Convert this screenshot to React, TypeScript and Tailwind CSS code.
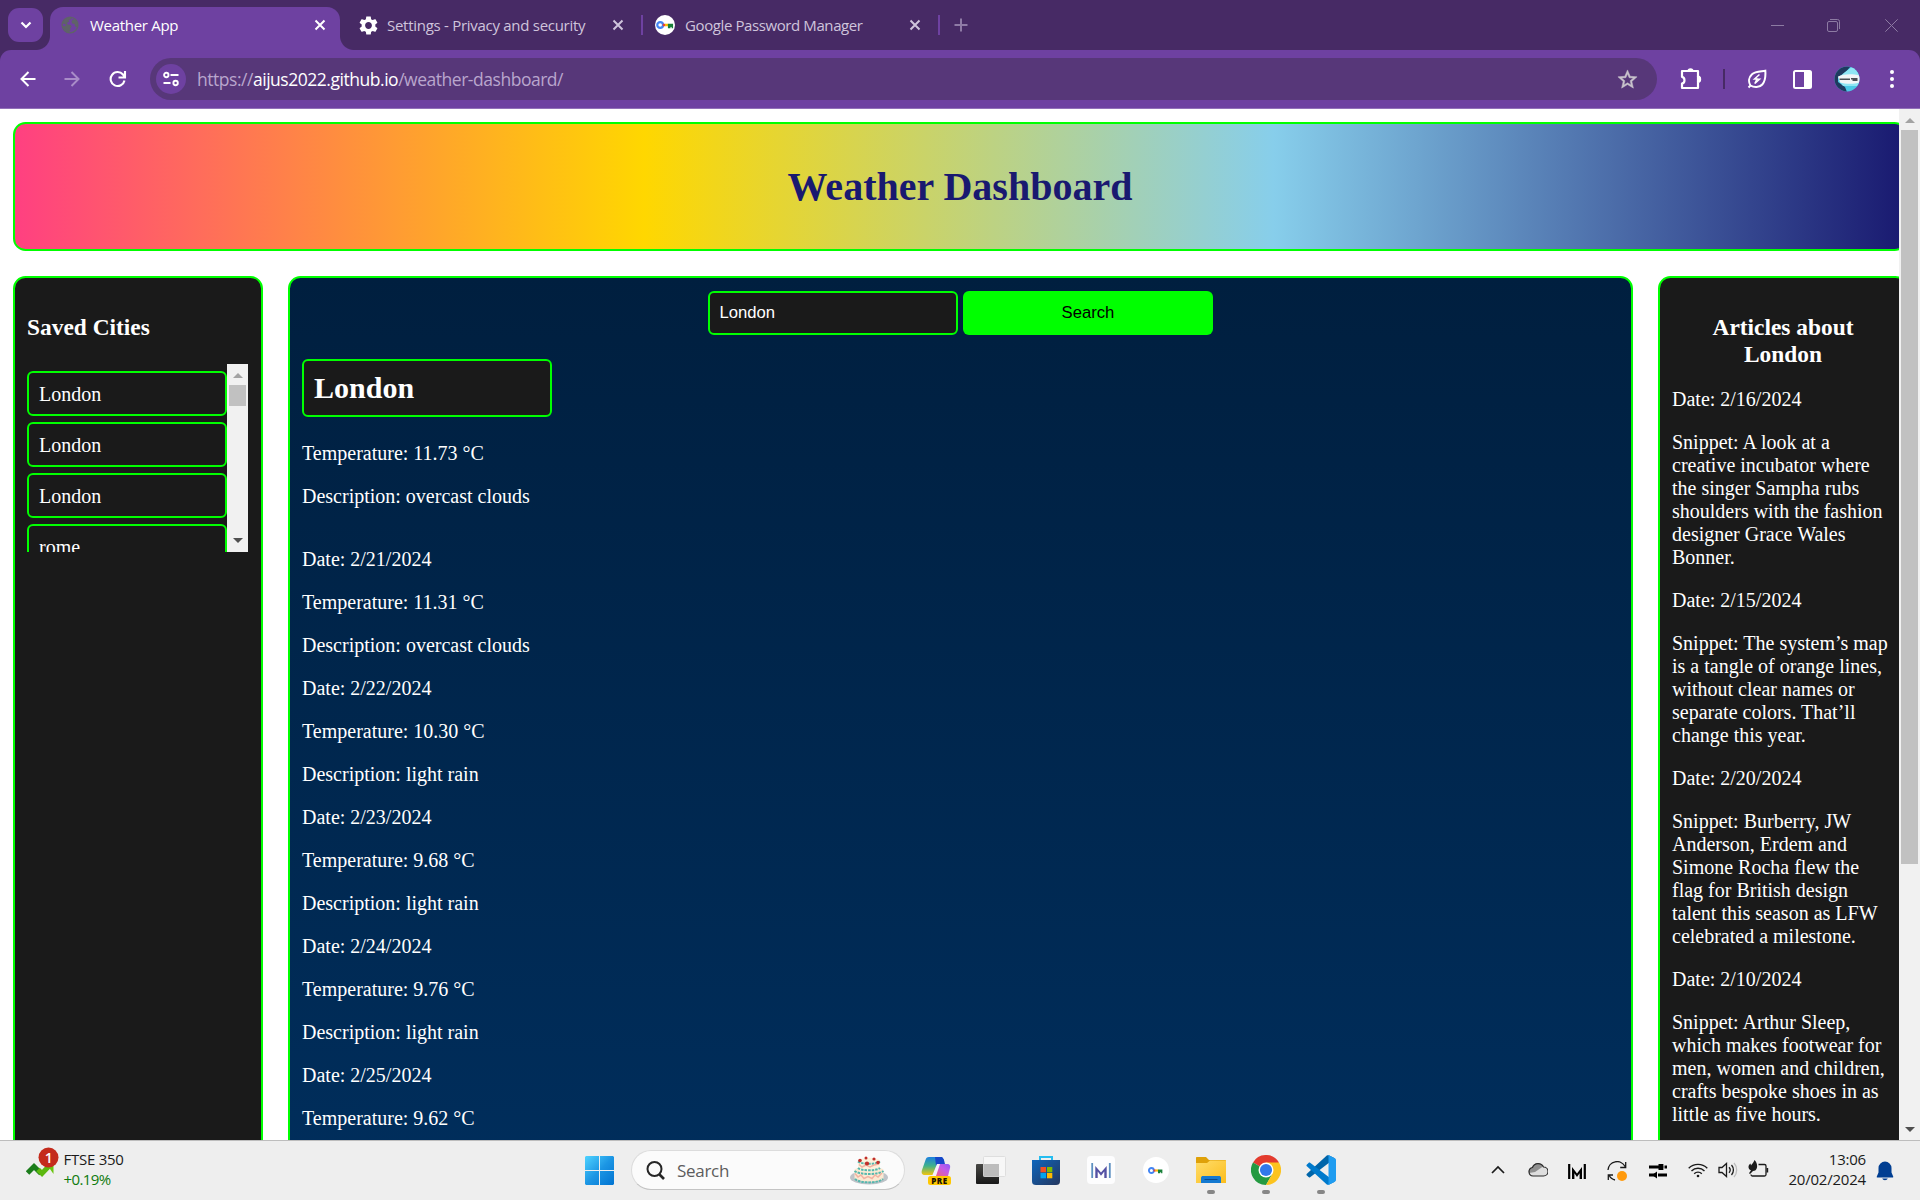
import React from "react";

const ui = "font-['Open_Sans','Noto_Sans',sans-serif]";

const savedCities = ["London", "London", "London", "rome"];

const forecast = [
  { date: "2/21/2024", temp: "11.31", desc: "overcast clouds" },
  { date: "2/22/2024", temp: "10.30", desc: "light rain" },
  { date: "2/23/2024", temp: "9.68", desc: "light rain" },
  { date: "2/24/2024", temp: "9.76", desc: "light rain" },
];

const articles = [
  {
    date: "2/16/2024",
    text: "A look at a creative incubator where the singer Sampha rubs shoulders with the fashion designer Grace Wales Bonner.",
  },
  {
    date: "2/15/2024",
    text: "The system’s map is a tangle of orange lines, without clear names or separate colors. That’ll change this year.",
  },
  {
    date: "2/20/2024",
    text: "Burberry, JW Anderson, Erdem and Simone Rocha flew the flag for British design talent this season as LFW celebrated a milestone.",
  },
  {
    date: "2/10/2024",
    text: "Arthur Sleep, which makes footwear for men, women and children, crafts bespoke shoes in as little as five hours.",
  },
];

function TabClose({ color }: { color: string }) {
  return (
    <svg width="12" height="12" viewBox="0 0 12 12" fill="none" stroke={color} strokeWidth="2">
      <path d="M1.5 1.5l9 9M10.5 1.5l-9 9" />
    </svg>
  );
}

function KeyIcon({ size }: { size: number }) {
  return (
    <svg width={size} height={size} viewBox="0 0 24 24">
      <circle cx="12" cy="12" r="12" fill="#fff" />
      <circle cx="6.2" cy="12" r="3.5" fill="none" stroke="#4285f4" strokeWidth="2.600" />
      <path d="M9.300 10.500h3v3h-3z" fill="#ea4335" />
      <path d="M12 10.500h4v3h-4z" fill="#fbbc04" />
      <path d="M15.500 10.500h6.200v5.500h-1.800v-1.600h-1.300v1.600h-3.100z" fill="#188038" />
    </svg>
  );
}

function TabStrip() {
  return (
    <div className="flex h-[50px] bg-[#472a65]">
      <div className="mt-2 ml-2 flex h-[34px] w-[35px] items-center justify-center rounded-[11px] bg-[#6e41a1]">
        <svg width="12" height="8" viewBox="0 0 12 8" fill="none" stroke="#fff" strokeWidth="2.2">
          <path d="M1.5 1.5L6 6l4.500-4.500" />
        </svg>
      </div>
      <div className="relative mt-[7px] ml-[7px] flex h-[43px] w-[290px] items-center rounded-t-[13px] bg-[#6e41a1] pb-[7px] pl-[11px] pr-[14px]">
        <div className="absolute bottom-0 -left-[14px] h-[14px] w-[14px] bg-[radial-gradient(circle_at_0_0,transparent_13.500px,#6e41a1_14.500px)]" />
        <div className="absolute bottom-0 -right-[14px] h-[14px] w-[14px] bg-[radial-gradient(circle_at_100%_0,transparent_13.500px,#6e41a1_14.500px)]" />
        <svg width="18" height="18" viewBox="0 0 18 18">
          <circle cx="9" cy="9" r="7.900" fill="none" stroke="#5f6368" strokeWidth="1.400" />
          <path
            d="M1.600 7.200C2.500 4 5 1.700 8.500 1.300l2.300.8-1.300 1.700-1.900.2.500 1.700-2 1.100.3 1.600 2.900.3 1.400 1.900-1.400 1.600.2 2-1.600 2.300C4.300 15.800 2 13 1.500 9.800l2.600.2 1-1.200zM11.800 3.200l3 1 1.900 3.800-.3 3.200-2.400-.8-.4-2.300-2.300-.5-.9-1.900z"
            fill="#5f6368"
          />
        </svg>
        <span className={`${ui} ml-[11px] flex-1 whitespace-nowrap text-[15px] tracking-[-0.3px] text-white`}>Weather App</span>
        <TabClose color="#fff" />
      </div>
      <div className="flex h-[50px] w-[303px] items-center pl-[19px]">
        <svg width="19" height="19" viewBox="2 2 20 20">
          <path
            fill="#fff"
            d="M19.140 12.940c.04-.3.060-.61.060-.94s-.02-.64-.07-.94l2.030-1.580c.18-.14.23-.41.120-.61l-1.920-3.320c-.12-.22-.37-.29-.59-.22l-2.390.96c-.5-.38-1.030-.7-1.620-.94l-.36-2.540c-.04-.24-.24-.41-.48-.41h-3.840c-.24 0-.43.170-.47.410l-.36 2.540c-.59.240-1.130.570-1.620.94l-2.390-.96c-.22-.08-.47 0-.59.220L2.740 8.870c-.12.210-.08.470.120.610l2.030 1.580c-.05.3-.09.630-.09.940s.02.640.070.940l-2.030 1.580c-.18.140-.23.410-.12.610l1.920 3.320c.120.220.370.290.590.220l2.390-.96c.5.380 1.030.7 1.620.94l.36 2.540c.05.240.240.410.480.410h3.840c.24 0 .44-.17.470-.41l.36-2.540c.59-.24 1.130-.56 1.620-.94l2.390.96c.22.080.470 0 .59-.22l1.920-3.320c.12-.22.070-.47-.12-.61l-2.010-1.580zM12 15.600c-1.980 0-3.600-1.620-3.600-3.600s1.620-3.600 3.600-3.600 3.600 1.620 3.600 3.600-1.620 3.600-3.600 3.600z"
          />
        </svg>
        <span className={`${ui} ml-[9px] w-[225px] whitespace-nowrap text-[15px] tracking-[-0.28px] text-[#cfc4dc]`}>
          Settings - Privacy and security
        </span>
        <TabClose color="#cfc4dc" />
        <span className="ml-[17px] h-5 w-0.5 bg-[#6e41a1]" />
      </div>
      <div className="flex h-[50px] items-center pl-[12px]">
        <KeyIcon size={20} />
        <span className={`${ui} ml-[10px] w-[224px] whitespace-nowrap text-[15px] tracking-[-0.4px] text-[#cfc4dc]`}>
          Google Password Manager
        </span>
        <TabClose color="#cfc4dc" />
        <span className="ml-[17px] h-5 w-0.5 bg-[#6e41a1]" />
        <svg className="ml-[14px]" width="14" height="14" viewBox="0 0 14 14" stroke="#8f7ba6" strokeWidth="2">
          <path d="M7 .5v13M.5 7h13" />
        </svg>
      </div>
      <div className="flex flex-1 items-center justify-end pr-[22px]">
        <svg width="13" height="13" viewBox="0 0 13 13" stroke="#8d7ba3">
          <path d="M0 6.500h13" />
        </svg>
        <svg className="ml-[43px]" width="13" height="13" viewBox="0 0 13 13" fill="none" stroke="#8d7ba3">
          <rect x=".5" y="2.500" width="10" height="10" rx="1.500" />
          <path d="M3 .5h7.500a2 2 0 012 2V10" />
        </svg>
        <svg className="ml-[45px]" width="13" height="13" viewBox="0 0 13 13" stroke="#8d7ba3">
          <path d="M.3.300l12.400 12.400M12.700.300L.3 12.700" />
        </svg>
      </div>
    </div>
  );
}

function Toolbar() {
  return (
    <div className="h-[59px] bg-[#472a65]">
      <div className="flex h-[59px] items-center rounded-t-[11px] border-b border-[#9270b8] bg-[#6e41a1]">
        <svg className="ml-[19.500px]" width="16" height="16" viewBox="0 0 16 16" fill="none" stroke="#fff" strokeWidth="2">
          <path d="M15.500 8H2M8.500 1L1.500 8l7 7" />
        </svg>
        <svg className="ml-[28.500px]" width="16" height="16" viewBox="0 0 16 16" fill="none" stroke="#a98cc8" strokeWidth="2">
          <path d="M.5 8H14M7.500 1l7 7-7 7" />
        </svg>
        <svg className="ml-[29px]" width="18" height="18" viewBox="0 0 18 18" fill="none" stroke="#fff" strokeWidth="2.100">
          <path d="M15.500 10.500A7 7 0 1 1 14 4.500l1.500 2M16 1v6.500H9.500" />
        </svg>
        <div className="ml-[23px] flex h-[42px] w-[1507px] items-center rounded-full bg-[#573779] pl-[6px] pr-[18px]">
          <div className="flex h-[30px] w-[30px] items-center justify-center rounded-full bg-[#6e41a1]">
            <svg width="16" height="16" viewBox="0 0 16 16" fill="none" stroke="#fff" strokeWidth="1.900">
              <circle cx="3.300" cy="4" r="2.200" />
              <path d="M7.500 4H15.500M.5 12h7" />
              <circle cx="12.600" cy="12" r="2.200" />
            </svg>
          </div>
          <div className={`${ui} ml-[11px] flex-1 whitespace-nowrap text-[17.500px] tracking-[-0.470px] text-[#b9a6cd]`}>
            https://<span className="text-white">aijus2022.github.io</span>/weather-dashboard/
          </div>
          <svg width="23" height="23" viewBox="0 0 24 24" fill="#c9c3cc" stroke="#c9c3cc" strokeWidth=".5">
            <path d="M22 9.240l-7.190-.62L12 2 9.190 8.630 2 9.240l5.460 4.730L5.820 21 12 17.270 18.180 21l-1.630-7.030L22 9.240zM12 15.400l-3.760 2.270 1-4.280-3.320-2.880 4.380-.38L12 6.100l1.710 4.040 4.380.38-3.320 2.880 1 4.280L12 15.400z" />
          </svg>
        </div>
        <svg className="ml-[23px]" width="22" height="22" viewBox="0 0 22 22">
          <path
            d="M3 3h15v5.500c2.500.3 2.500 5 0 5.300V20H2v-4.500c3.300-.7 3.300-6 0-6.700V3z"
            fill="none"
            stroke="#fff"
            strokeWidth="2.200"
            strokeLinejoin="round"
          />
          <path d="M7.500 3a3 2.700 0 016 0zM18.500 8.300a2.700 3 0 010 6z" fill="#fff" />
          <path d="M18 8v6" stroke="#fff" strokeWidth="2.200" />
        </svg>
        <span className="ml-[21px] h-5 w-0.5 bg-[#472a65]" />
        <svg className="ml-[22px]" width="20" height="20" viewBox="0 0 20 20" fill="none" stroke="#fff" strokeWidth="2">
          <path d="M3.500 16.500C1 12.500 2 8 5 5.200 8 2.200 13 2.500 18.300 1.700c.5 6.300-.3 10.800-3 13.800-3 3.300-8.300 3.300-11.800 1zM1.500 18.500l2-2" />
          <path d="M12.500 5.500L7.500 10h3.300l-1.300.2h3L7.800 14.500l2-4" strokeWidth="1.500" />
        </svg>
        <svg className="ml-[26px]" width="19" height="19" viewBox="0 0 19 19">
          <rect x="1" y="1" width="17" height="17" rx="1.500" fill="none" stroke="#fff" strokeWidth="2" />
          <path d="M11 1h7v17h-7z" fill="#fff" />
        </svg>
        <svg className="ml-[22px]" width="26" height="26" viewBox="0 0 26 26">
          <defs>
            <clipPath id="avatar">
              <circle cx="13" cy="13" r="12.500" />
            </clipPath>
          </defs>
          <g clipPath="url(#avatar)">
            <path d="M0 0h26v26H0z" fill="#4cc9e6" />
            <path d="M0 0h17l-7 8-6 3v5l7 5 2 5H0z" fill="#1f3a5f" />
            <path d="M11 6l7-5 6 1 2 6-2 3H5zM6 16h20l-3 4H9z" fill="#8ee6f4" />
            <path d="M4 10.500c6-2.500 13-3 22-1v7c-7 2-15 1.500-20 0z" fill="#f1f5f7" />
            <path d="M5.500 13.200h10.500M17 12.800h6.500M18.500 14.200h5" stroke="#4a5055" strokeWidth="1.500" />
          </g>
        </svg>
        <svg className="ml-[29px]" width="6" height="20" viewBox="0 0 6 20" fill="#fff">
          <circle cx="3" cy="3" r="2" />
          <circle cx="3" cy="10" r="2" />
          <circle cx="3" cy="17" r="2" />
        </svg>
      </div>
    </div>
  );
}

function Arrow({ up, dark, className }: { up?: boolean; dark?: boolean; className?: string }) {
  return (
    <svg className={className} width="10" height="5" viewBox="0 0 10 5" fill={dark ? "#505050" : "#a3a3a3"}>
      <path d={up ? "M0 5L5 0l5 5z" : "M0 0l5 5 5-5z"} />
    </svg>
  );
}

function Page() {
  return (
    <div className="h-full w-[1899px] overflow-hidden bg-white font-['Liberation_Serif',serif] text-[20px] leading-[23px] text-white">
      <div className="w-[1908px] pt-[13px] pl-[13px]">
        <header className="flex h-[129px] w-[1894px] items-center justify-center rounded-[12.500px] border-2 border-[#00ff00] bg-[linear-gradient(90deg,#ff4081,#ffd700_33.300%,#87ceeb_66.600%,#191970)] text-[40px] leading-[46px] font-bold text-[#191970]">
          <h1>Weather Dashboard</h1>
        </header>
        <div className="mt-[25px] flex h-[1210px] w-[1895px] gap-[25px]">
          <aside className="h-full w-[250px] shrink-0 rounded-[12.500px] border-2 border-[#00ff00] bg-[#1a1a1a] px-[12px] pt-[36px]">
            <h3 className="text-[23.400px] leading-[27px] font-bold">Saved Cities</h3>
            <div className="mt-[23px] flex h-[188px] w-[221px] overflow-hidden">
              <ul className="flex w-[200px] flex-col gap-[6px] pt-[7px]">
                {savedCities.map((city, i) => (
                  <li key={i} className="h-[45px] shrink-0 rounded-[6px] border-2 border-[#00ff00] pt-[10px] pl-[10px]">
                    {city}
                  </li>
                ))}
              </ul>
              <div className="flex w-[21px] flex-col items-center bg-[#f1f1f1]">
                <Arrow up className="mt-[9px]" />
                <span className="mt-[7px] h-[21px] w-[17px] bg-[#c1c1c1]" />
                <Arrow dark className="mt-auto mb-[9px]" />
              </div>
            </div>
          </aside>
          <main className="h-full w-[1345px] shrink-0 rounded-[12.500px] border-2 border-[#00ff00] bg-[linear-gradient(180deg,#001f3f,#003366)] px-[12px] pt-[13px]">
            <div className="flex justify-center gap-[5px] font-['Liberation_Sans',sans-serif] text-[16.670px] leading-[19px]">
              <div className="h-[44px] w-[250px] rounded-[6px] border-2 border-[#00ff00] bg-[#1a1a1a] pt-[9.500px] pl-[9.500px]">London</div>
              <div className="h-[44px] w-[250px] rounded-[6px] bg-[#00ff00] pt-[11.500px] text-center text-black">Search</div>
            </div>
            <div className="mt-[24px] h-[58px] w-[250px] rounded-[6px] border-2 border-[#00ff00] bg-[#1a1a1a] pt-[10px] pl-[10px]">
              <h2 className="text-[30px] leading-[34px] font-bold">London</h2>
            </div>
            <div className="mt-[25px] flex flex-col gap-5">
              <p>Temperature: 11.73 °C</p>
              <p>Description: overcast clouds</p>
            </div>
            <div className="mt-[40px] flex flex-col gap-5">
              {forecast.map((day) => (
                <React.Fragment key={day.date}>
                  <p>Date: {day.date}</p>
                  <p>Temperature: {day.temp} °C</p>
                  <p>Description: {day.desc}</p>
                </React.Fragment>
              ))}
              <p>Date: 2/25/2024</p>
              <p>Temperature: 9.62 °C</p>
            </div>
          </main>
          <aside className="h-full w-[250px] shrink-0 rounded-[12.500px] border-2 border-[#00ff00] bg-[#1a1a1a] px-[12px] pt-[36px]">
            <h3 className="text-center text-[23.400px] leading-[27px] font-bold">
              Articles about
              <br />
              London
            </h3>
            <div className="mt-[20px] flex flex-col gap-5">
              {articles.map((article) => (
                <React.Fragment key={article.date}>
                  <p>Date: {article.date}</p>
                  <p>{`Snippet: ${article.text}`}</p>
                </React.Fragment>
              ))}
            </div>
          </aside>
        </div>
      </div>
    </div>
  );
}

function Slot({ children, active }: { children: React.ReactNode; active?: boolean }) {
  return (
    <div className="flex h-[59px] w-[55px] flex-col items-center pt-[14px]">
      <div className="flex h-[30px] w-[30px] items-center justify-center">{children}</div>
      {active && <span className="mt-[5px] h-1 w-2 rounded-full bg-[#868686]" />}
    </div>
  );
}

function Taskbar() {
  return (
    <footer className={`${ui} flex h-[60px] border-t border-[#bdbdbd] bg-[#eeeeee]`}>
      <div className="flex w-[585px] pt-[6px] pl-[26px]">
        <svg width="34" height="34" viewBox="0 0 34 34">
          <path d="M1.500 26L8 19.500l7 7" fill="none" stroke="#1b7d1b" strokeWidth="5" />
          <path d="M12 22.500l4 4L25 17" fill="none" stroke="#5cb80f" strokeWidth="5" />
          <path d="M19 15h8.500v12z" fill="#6ac40e" />
          <circle cx="22.500" cy="10.500" r="10" fill="#c42b1c" />
          <text x="22.700" y="15.500" textAnchor="middle" fontSize="14" fill="#fff" fontFamily="Open Sans" fontWeight="600">
            1
          </text>
        </svg>
        <div className="ml-[3.500px] pt-[2px] text-[15px] leading-[20px]">
          <p className="tracking-[-0.25px] text-[#1b1b1b]">FTSE 350</p>
          <p className="tracking-[-0.6px] text-[#0f7b0f]">+0.19%</p>
        </div>
      </div>
      <svg className="mt-[15px]" width="29" height="29" viewBox="0 0 29 29">
        <defs>
          <linearGradient id="win" x1="0" y1="0" x2="1" y2="1" gradientUnits="objectBoundingBox">
            <stop offset="0" stopColor="#4fd3ff" />
            <stop offset=".5" stopColor="#1c96e4" />
            <stop offset="1" stopColor="#0173d1" />
          </linearGradient>
        </defs>
        <path fill="url(#win)" d="M1 0h13v14H0V1zM15 0h13l1 1v13H15zM0 15h14v14H1l-1-1zM15 15h14v13l-1 1H15z" />
      </svg>
      <div className="mt-[9px] ml-[17px] flex h-[40px] w-[274px] items-center rounded-full border border-[#dcdcdc] border-b-[#c4c4c4] bg-[#fbfbfb] pl-[14px]">
        <svg width="19" height="19" viewBox="0 0 19 19" fill="none" stroke="#262626" strokeWidth="2">
          <circle cx="8.500" cy="8" r="7" />
          <path d="M13.500 13.500l4.500 4.500" strokeWidth="2.600" />
        </svg>
        <span className="ml-[12px] w-[173px] pt-[1px] text-[17px] tracking-[-0.3px] text-[#5d5d5d]">Search</span>
        <svg width="38" height="30" viewBox="0 0 38 30">
          <ellipse cx="19" cy="22.500" rx="19" ry="7" fill="#bfc3c8" />
          <path d="M4.500 15c0-4 29-4 29 0v8c-2 5-27 5-29 0z" fill="#fbe9d2" />
          <path d="M8 6c0-4 22-4 22 0v8c-2 3.500-20 3.500-22 0z" fill="#fdf1dc" />
          <path d="M4.500 16c5 4 24 4 29 0M5 24c5 4.500 23 4.500 28 0M8 13c3 3 19 3 22 0M8 6.500c4 3 18 3 22 0" fill="none" stroke="#55b8ae" strokeWidth="2" strokeDasharray="2.500 1" />
          <path d="M5 18.500l3 3.500 3-2 3 3.500 4-2 4 2 3-3.500 3 2 4-4M9 9.500l3 2.500 4-2 4 2 4-2 5-1" fill="none" stroke="#f2b3a2" strokeWidth="1.500" />
          <g fill="#c22f2a">
            <circle cx="10" cy="5.500" r="1.800" />
            <circle cx="17" cy="8.500" r="2.100" />
            <circle cx="24" cy="4" r="1.600" />
            <circle cx="28" cy="7.500" r="1.800" />
            <circle cx="16" cy="3" r="1.500" />
          </g>
        </svg>
      </div>
      <div className="ml-[3px] flex">
        <Slot>
          <svg width="30" height="30" viewBox="0 0 30 30">
            <defs>
              <linearGradient id="cpa" x1="0" y1="0" x2="0" y2="1">
                <stop offset="0" stopColor="#1b7fe0" />
                <stop offset=".5" stopColor="#3fb28a" />
                <stop offset="1" stopColor="#f3c50c" />
              </linearGradient>
              <linearGradient id="cpb" x1="0" y1="1" x2="1" y2="0">
                <stop offset="0" stopColor="#f4646f" />
                <stop offset=".6" stopColor="#c35be8" />
                <stop offset="1" stopColor="#8d5cf5" />
              </linearGradient>
            </defs>
            <path d="M8 2h13l2 3-4 5-6 10H4c-3 0-4-2-3-5L4.500 5C5 3 6 2 8 2z" fill="url(#cpa)" />
            <path d="M14 2h6c2 0 3 2 4 7h-7l-2 2z" fill="#1647c9" />
            <path d="M18 9h8c3 0 3.500 2 3 4l-2 8H12z" fill="url(#cpb)" />
            <path d="M16 9h3l-4 12h-4z" fill="#f5f0fa" />
            <rect x="7" y="21" width="23" height="9" rx="2.500" fill="#ffc800" />
            <text x="18.500" y="28.600" textAnchor="middle" fontSize="8" fontWeight="800" letterSpacing=".6" fontFamily="Open Sans" fill="#1a1300">
              PRE
            </text>
          </svg>
        </Slot>
        <Slot>
          <svg width="30" height="30" viewBox="0 0 30 30">
            <defs>
              <linearGradient id="tv" x1="0" y1="0" x2="0" y2="1">
                <stop offset="0" stopColor="#484845" />
                <stop offset="1" stopColor="#181818" />
              </linearGradient>
            </defs>
            <rect x="0" y="9" width="23" height="20" rx="1" fill="url(#tv)" />
            <rect x="7.500" y="1.500" width="22" height="20" rx="1" fill="#f7f7f7" stroke="#dedede" />
            <path d="M7.500 9H23v12.500H7.500z" fill="#bdbdbd" />
          </svg>
        </Slot>
        <Slot>
          <svg width="30" height="30" viewBox="0 0 30 30">
            <defs>
              <linearGradient id="st" x1="0" y1="0" x2="1" y2="1">
                <stop offset="0" stopColor="#0e66bd" />
                <stop offset="1" stopColor="#24365e" />
              </linearGradient>
            </defs>
            <path d="M9 6V2h12v4" fill="none" stroke="#25bdf0" strokeWidth="2" />
            <path d="M1 5h28v21c0 3-1.500 4-4 4H5c-2.500 0-4-1-4-4z" fill="url(#st)" />
            <path d="M9.500 12H15v5.300H9.500z" fill="#f25022" />
            <path d="M16 12h5.300v5.300H16z" fill="#7fba00" />
            <path d="M9.500 18H15v5.300H9.500z" fill="#00a4ef" />
            <path d="M16 18h5.300v5.300H16z" fill="#ffb900" />
          </svg>
        </Slot>
        <Slot>
          <svg width="28" height="28" viewBox="0 0 28 28">
            <rect width="28" height="28" rx="4" fill="#fdfdfe" />
            <path d="M5.200 7v15M22.800 7v15" stroke="#5c8fc0" strokeWidth="1.800" />
            <path d="M8.300 22V10l5.700 6.500 5.700-6.500v12h-2.400v-6.500L14 19.800l-3.300-4.300V22z" fill="#5451a3" />
          </svg>
        </Slot>
        <Slot>
          <div className="flex h-[26px] w-[26px] items-center justify-center rounded-full bg-white">
            <KeyIcon size={17} />
          </div>
        </Slot>
        <Slot active>
          <svg width="30" height="30" viewBox="0 0 30 30">
            <defs>
              <linearGradient id="fo" x1="0" y1="0" x2="1" y2="1">
                <stop offset="0" stopColor="#ffdd6b" />
                <stop offset="1" stopColor="#fbbd1c" />
              </linearGradient>
            </defs>
            <path d="M0 3c0-.6.400-1 1-1h9l3 3h16c.6 0 1 .4 1 1v6H0z" fill="#dfa109" />
            <path d="M0 8h11l3-2.500h16V28H0z" fill="url(#fo)" />
            <path d="M5 28v-5c0-1.500 1-2 2-2h16c1 0 2 .5 2 2v5z" fill="#1479d0" />
            <path d="M8.500 24.500h13" stroke="#0a4a8c" />
          </svg>
        </Slot>
        <Slot active>
          <svg width="30" height="30" viewBox="0 0 48 48">
            <path d="M24 24L3.200 12A24 24 0 0144.800 12z" fill="#e33b2e" />
            <path d="M24 24L3.200 12A24 24 0 0024 48l10.400-18z" fill="#249a41" />
            <path d="M24 24l10.400 6L24 48A24 24 0 0044.800 12H24z" fill="#fcc31e" />
            <circle cx="24" cy="24" r="12" fill="#fff" />
            <circle cx="24" cy="24" r="9.700" fill="#3178ea" />
          </svg>
        </Slot>
        <Slot active>
          <svg width="30" height="30" viewBox="0 0 100 100">
            <path d="M96 11L76 1c-2-1-5-.6-6.700 1L3 62.500c-2 1.600-2 4.500 0 6l5.500 5c1.500 1.400 3.800 1.500 5.300.3L93 13c3-2 7 0 7 3z" fill="#0065a9" />
            <path d="M96 89L76 99c-2 1-5 .6-6.700-1L3 37.500c-2-1.600-2-4.500 0-6l5.500-5c1.500-1.400 3.800-1.500 5.300-.3L93 87c3 2 7 0 7-3z" fill="#007acc" />
            <path d="M76 99c-2.600 1-5.200.5-7-1 2.200 2.200 6 .6 6-2.600V4.600c0-3.200-3.800-4.800-6-2.600 1.800-1.500 4.400-2 7-1l20 10c2 1 4 3 4 5.500v67c0 2.500-2 4.500-4 5.500z" fill="#1f9cf0" />
          </svg>
        </Slot>
      </div>
      <div className="ml-auto flex h-[59px] items-center text-black">
        <div className="flex w-[40px] justify-center pb-[2px]">
          <svg width="14" height="9" viewBox="0 0 14 9" fill="none" stroke="#1b1b1b" strokeWidth="1.700">
            <path d="M1 8l6-6 6 6" />
          </svg>
        </div>
        <div className="flex w-[40px] justify-center pb-[2px]">
          <svg width="20" height="15" viewBox="0 0 20 15">
            <path d="M5 14a4.300 4.300 0 01-.5-8.500A6 6 0 0115.500 5 4.500 4.500 0 0115.500 14z" fill="#dedede" />
            <path d="M4 5.500A6 6 0 0115 4.500L7 10 1 11C0 8 2 6 4 5.500z" fill="#8f8f8f" />
            <path d="M5 14a4.300 4.300 0 01-.5-8.500A6 6 0 0115.500 5 4.500 4.500 0 0115.500 14z" fill="none" stroke="#2b2b2b" strokeWidth="1.200" />
          </svg>
        </div>
        <div className="flex w-[38px] justify-center pt-[1px]">
          <svg width="18" height="15" viewBox="0 0 18 15">
            <path d="M1.200 0v15M16.800 0v15" stroke="#000" strokeWidth="2.200" />
            <path d="M4 15V3l5 6.500L14 3v12h-2.400V9.300L9 13 6.400 9.300V15z" fill="#000" />
          </svg>
        </div>
        <div className="flex w-[42px] justify-center">
          <svg width="20" height="20" viewBox="0 0 20 20">
            <path d="M1 9A9 9 0 0118 5.500M18.700 1v5.500h-5.500M8 19a9 9 0 01-6-5M1.300 19v-5H6" fill="none" stroke="#1b1b1b" strokeWidth="1.300" />
            <circle cx="15" cy="15" r="5" fill="#ff9a0d" />
          </svg>
        </div>
        <div className="flex w-[40px] justify-center">
          <svg width="18" height="16" viewBox="0 0 18 16">
            <path d="M0 4h18M0 12h18" stroke="#000" strokeWidth="3" />
            <path d="M9.500 1l5 0v6l-5 0z M3 12l5-3.500v7z" fill="#000" />
            <path d="M15 1.500v5M8.500 9v6" stroke="#eee" strokeWidth="1" />
          </svg>
        </div>
        <div className="ml-[5px] flex w-[30px] justify-center pb-[1px]">
          <svg width="20" height="16" viewBox="0 0 20 16" fill="none" stroke="#1b1b1b" strokeWidth="1.400">
            <path d="M.7 6.200a13.200 13.200 0 0118.600 0M3.500 9a9.200 9.200 0 0113 0M6.200 11.700a5.400 5.400 0 017.600 0" />
            <circle cx="10" cy="14" r="1.300" fill="#1b1b1b" stroke="none" />
          </svg>
        </div>
        <div className="flex w-[30px] justify-center pb-[1px]">
          <svg width="20" height="18" viewBox="0 0 20 18" fill="none" stroke="#1b1b1b" strokeWidth="1.300">
            <path d="M1 6.500h3L8.500 2.500v13L4 11.500H1z" />
            <path d="M11 6.300a4 4 0 010 5.400M13.500 4a7.500 7.500 0 010 10" />
            <path d="M16 2a10.500 10.500 0 010 14" stroke="#bdbdbd" />
          </svg>
        </div>
        <div className="flex w-[30px] justify-center pb-[4px]">
          <svg width="21" height="18" viewBox="0 0 21 18">
            <path d="M10.500 4.500h6a1.500 1.500 0 011.500 1.500v8.500a1.500 1.500 0 01-1.500 1.500H4.500A1.500 1.500 0 013 14.500" fill="none" stroke="#1b1b1b" strokeWidth="1.300" />
            <path d="M18.500 8h1.700v4.500h-1.700z" fill="#1b1b1b" />
            <path d="M6.500 0c2 2 3 4.500 2.500 7.500C8.500 10 7 11 5 11l-3 3-1-.7 2-3C-.5 9 0 5 2.500 3.500l.5 2C4 4 5.500 2.500 6.500 0z" fill="#1b1b1b" />
          </svg>
        </div>
        <div className="w-[93px] pb-[3px] text-right text-[15px] leading-[20px] tracking-[-0.2px] text-[#1b1b1b]">
          <p>13:06</p>
          <p>20/02/2024</p>
        </div>
        <div className="mr-[16px] flex w-[38px] justify-center">
          <svg width="18" height="20" viewBox="0 0 18 20" fill="#003e92">
            <path d="M9 .5a6.500 6.500 0 00-6.500 6.500v4.500L.8 15.500c-.2.500 0 1 .6 1h15.200c.6 0 .8-.5.600-1l-1.700-4V7A6.500 6.500 0 009 .5zM6.200 17.500h5.600a2.900 2.200 0 01-5.600 0z" />
          </svg>
        </div>
      </div>
    </footer>
  );
}

export default function App() {
  return (
    <div className="flex h-[1200px] w-[1920px] flex-col overflow-hidden">
      <TabStrip />
      <Toolbar />
      <div className="flex h-[1031px] overflow-hidden">
        <Page />
        <div className="flex w-[21px] flex-col items-center bg-[#f1f1f1]">
          <Arrow up className="mt-[9px]" />
          <span className="mt-[7px] h-[734px] w-[17px] bg-[#c1c1c1]" />
          <Arrow dark className="mt-auto mb-[8px]" />
        </div>
      </div>
      <Taskbar />
    </div>
  );
}
